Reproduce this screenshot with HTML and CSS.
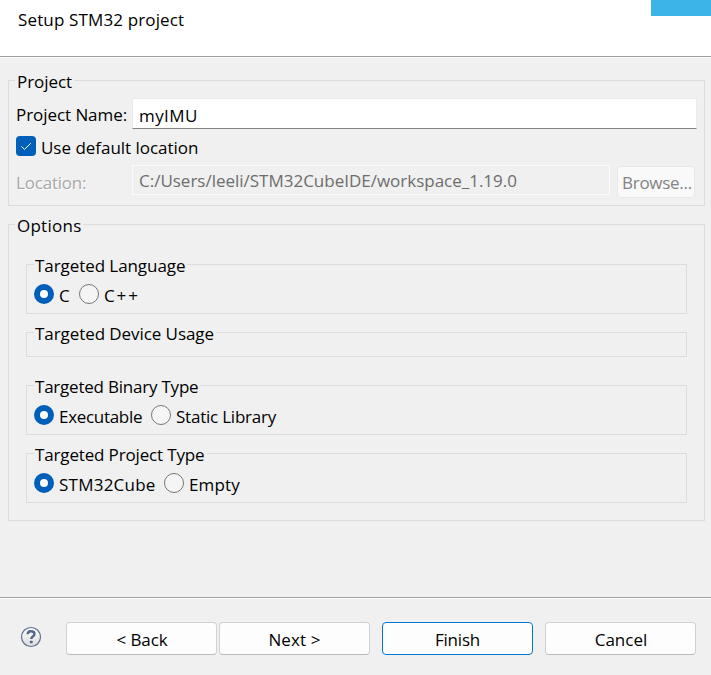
FILE: index.html
```
<!DOCTYPE html>
<html lang="en">
<head>
<meta charset="utf-8">
<title>Setup STM32 project</title>
<link rel="stylesheet" href="styles.css">
</head>
<body>
<div class="dialog">
  <header class="banner">
    <p class="banner-text">Setup STM32 project</p>
    <div class="banner-logo"></div>
  </header>

  <main class="content">
    <section class="group project">
      <h2 class="legend project-legend">Project</h2>
      <div class="row name-row">
        <label class="label">Project Name:</label>
        <div class="field"><span class="name-value">myIMU</span></div>
      </div>
      <div class="row default-row">
        <span class="checkbox">
          <svg width="20" height="20" viewBox="0 0 20 20"><path d="M5.3 10.3 8.5 13.4 14.8 7.2" fill="none" stroke="#fff" stroke-width="1"/></svg>
        </span>
        <span class="check-text">Use default location</span>
      </div>
      <div class="row location-row">
        <label class="label disabled location-label">Location:</label>
        <div class="field field-disabled">C:/Users/leeli/STM32CubeIDE/workspace_1.19.0</div>
        <div class="browse">Browse...</div>
      </div>
    </section>

    <section class="group options">
      <h2 class="legend options-legend">Options</h2>
      <div class="group sub language">
        <h3 class="legend">Targeted Language</h3>
        <div class="radios">
          <span class="radio on"></span><span class="radio-text c-text">C</span>
          <span class="radio"></span><span class="radio-text cpp-text">C++</span>
        </div>
      </div>
      <div class="group sub device">
        <h3 class="legend">Targeted Device Usage</h3>
      </div>
      <div class="group sub binary">
        <h3 class="legend binary-legend">Targeted Binary Type</h3>
        <div class="radios">
          <span class="radio on"></span><span class="radio-text exec-text">Executable</span>
          <span class="radio"></span><span class="radio-text static-text">Static Library</span>
        </div>
      </div>
      <div class="group sub type">
        <h3 class="legend type-legend">Targeted Project Type</h3>
        <div class="radios">
          <span class="radio on"></span><span class="radio-text cube-text">STM32Cube</span>
          <span class="radio"></span><span class="radio-text empty-text">Empty</span>
        </div>
      </div>
    </section>
  </main>

  <footer class="buttons">
    <svg class="help" width="22" height="22" viewBox="0 0 22 22">
      <defs><linearGradient id="g" x1="0" y1="0" x2="0" y2="1"><stop offset="0" stop-color="#fff"/><stop offset="1" stop-color="#dcdcdc"/></linearGradient></defs>
      <circle cx="11" cy="11" r="9.5" fill="url(#g)" stroke="#5d7093" stroke-width="1.2"/>
      <path d="M7.6 8.3C7.7 6 9 5.2 11 5.2c2.200 0 3.500 1 3.500 2.800 0 2.500-3.300 2.500-3.300 5" fill="none" stroke="#53678c" stroke-width="2.400"/>
      <rect x="9.900" y="14.700" width="2.700" height="2.600" rx=".6" fill="#53678c"/>
    </svg>
    <div class="button back">&lt; Back</div>
    <div class="button next">Next &gt;</div>
    <div class="button finish">Finish</div>
    <div class="button cancel">Cancel</div>
  </footer>
</div>
</body>
</html>
```
FILE: styles.css
```
* { box-sizing: border-box; }
body {
  margin: 0;
  background: #f0f0f0;
  color: #000;
  font: 17px/24px "Open Sans", "Noto Sans", sans-serif;
  overflow: hidden;
}
h2, h3, p { margin: 0; font: inherit; }
svg { display: block; }
.dialog { width: 711px; height: 675px; display: flex; flex-direction: column; white-space: nowrap; }

.banner {
  height: 58px;
  flex: none;
  display: flex;
  justify-content: space-between;
  background: #fff;
  background-image: linear-gradient(#a0a0a0, #a0a0a0);
  background-size: 100% 1px;
  background-position: 0 56px;
  background-repeat: no-repeat;
}
.banner-text { padding: 8px 0 0 18px; letter-spacing: .14px; }
.banner-logo { width: 60px; height: 16px; background: #3cb4e7; }

.content { height: 539px; flex: none; padding: 22px 6px 0 8px; }
.group { border: 1px solid #dcdcdc; }
.legend {
  width: fit-content;
  height: 24px;
  margin: -11px 0 0 6px;
  padding: 0 2px 0 1px;
  background: #f0f0f0;
  letter-spacing: -.07px;
}
.project { height: 126px; }
.project-legend { padding-left: 2px; }
.options { height: 297px; margin-top: 18px; padding: 0 17px; }
.options-legend { margin-left: -11px; padding-left: 2px; letter-spacing: .25px; }

.row { display: flex; }
.label { width: 116px; flex: none; letter-spacing: -.06px; }
.name-row { margin-top: 4px; padding-left: 7px; }
.name-row .label { padding-top: 5px; }
.field { height: 31px; flex: none; padding-left: 6px; }
.name-row .field {
  width: 565px;
  padding-top: 5px;
  background: #fff;
  border: 1px solid #ebebeb;
  border-bottom-color: #858585;
}
.name-value { letter-spacing: .4px; }
.default-row { margin-top: 7px; padding-left: 7px; }
.checkbox { width: 20px; height: 20px; border-radius: 4px; background: #005fb8; }
.check-text { margin-left: 5px; letter-spacing: -.02px; }
.location-row { margin-top: 5px; padding-left: 7px; }
.disabled { color: #a8a8a8; text-shadow: 1px 1px 0 #fff; padding-top: 6px; }
.location-label { letter-spacing: -.2px; }
.field-disabled {
  width: 478px;
  height: 30px;
  padding-top: 3px;
  border: 1px solid #fbfbfb;
  color: #6d6d6d;
  letter-spacing: -.01px;
}
.browse {
  width: 78px;
  height: 32px;
  margin: 1px 0 0 7px;
  padding: 4px 0 0 4px;
  border: 1px solid #e8e8e8;
  border-radius: 4px;
  background: #f9f9f9;
  color: #838383;
  letter-spacing: -.27px;
}

.sub .legend { margin-left: 7px; }
.language { height: 50px; margin-top: 26px; }
.device { height: 25px; margin-top: 18px; }
.binary { height: 50px; margin-top: 28px; }
.type { height: 50px; margin-top: 18px; }
.sub .binary-legend { letter-spacing: -.22px; }
.sub .type-legend { letter-spacing: -.15px; }
.radios { display: flex; margin-top: 6px; padding-left: 7px; }
.radio {
  width: 20px;
  height: 20px;
  flex: none;
  border: 1px solid #777;
  border-radius: 50%;
  background: #f5f5f5;
}
.on { border: 6px solid #005fb8; background: #fff; }
.radio-text { margin-left: 5px; height: 24px; }
.c-text { width: 20px; }
.cpp-text { letter-spacing: 1.9px; }
.exec-text { width: 92px; letter-spacing: -.3px; }
.static-text { letter-spacing: -.22px; }
.cube-text { width: 105px; letter-spacing: .24px; }
.empty-text { letter-spacing: .15px; }

.buttons {
  flex: 1;
  display: flex;
  padding: 24px 0 0 20px;
  border-top: 1px solid #a0a0a0;
  box-shadow: inset 0 1px #fff;
}
.help { margin: 4px 24px 0 0; }
.button {
  width: 151px;
  height: 33px;
  padding-top: 5px;
  text-align: center;
  background: #fdfdfd;
  border: 1px solid #d0d0d0;
  border-bottom-color: #bababa;
  border-radius: 4px;
}
.back { padding-left: 1px; letter-spacing: -.1px; }
.next { margin-left: 2px; letter-spacing: .1px; }
.finish { margin-left: 12px; border-color: #0078d4; letter-spacing: -.18px; }
.cancel { margin-left: 12px; padding-left: 1px; letter-spacing: 0; }
```
